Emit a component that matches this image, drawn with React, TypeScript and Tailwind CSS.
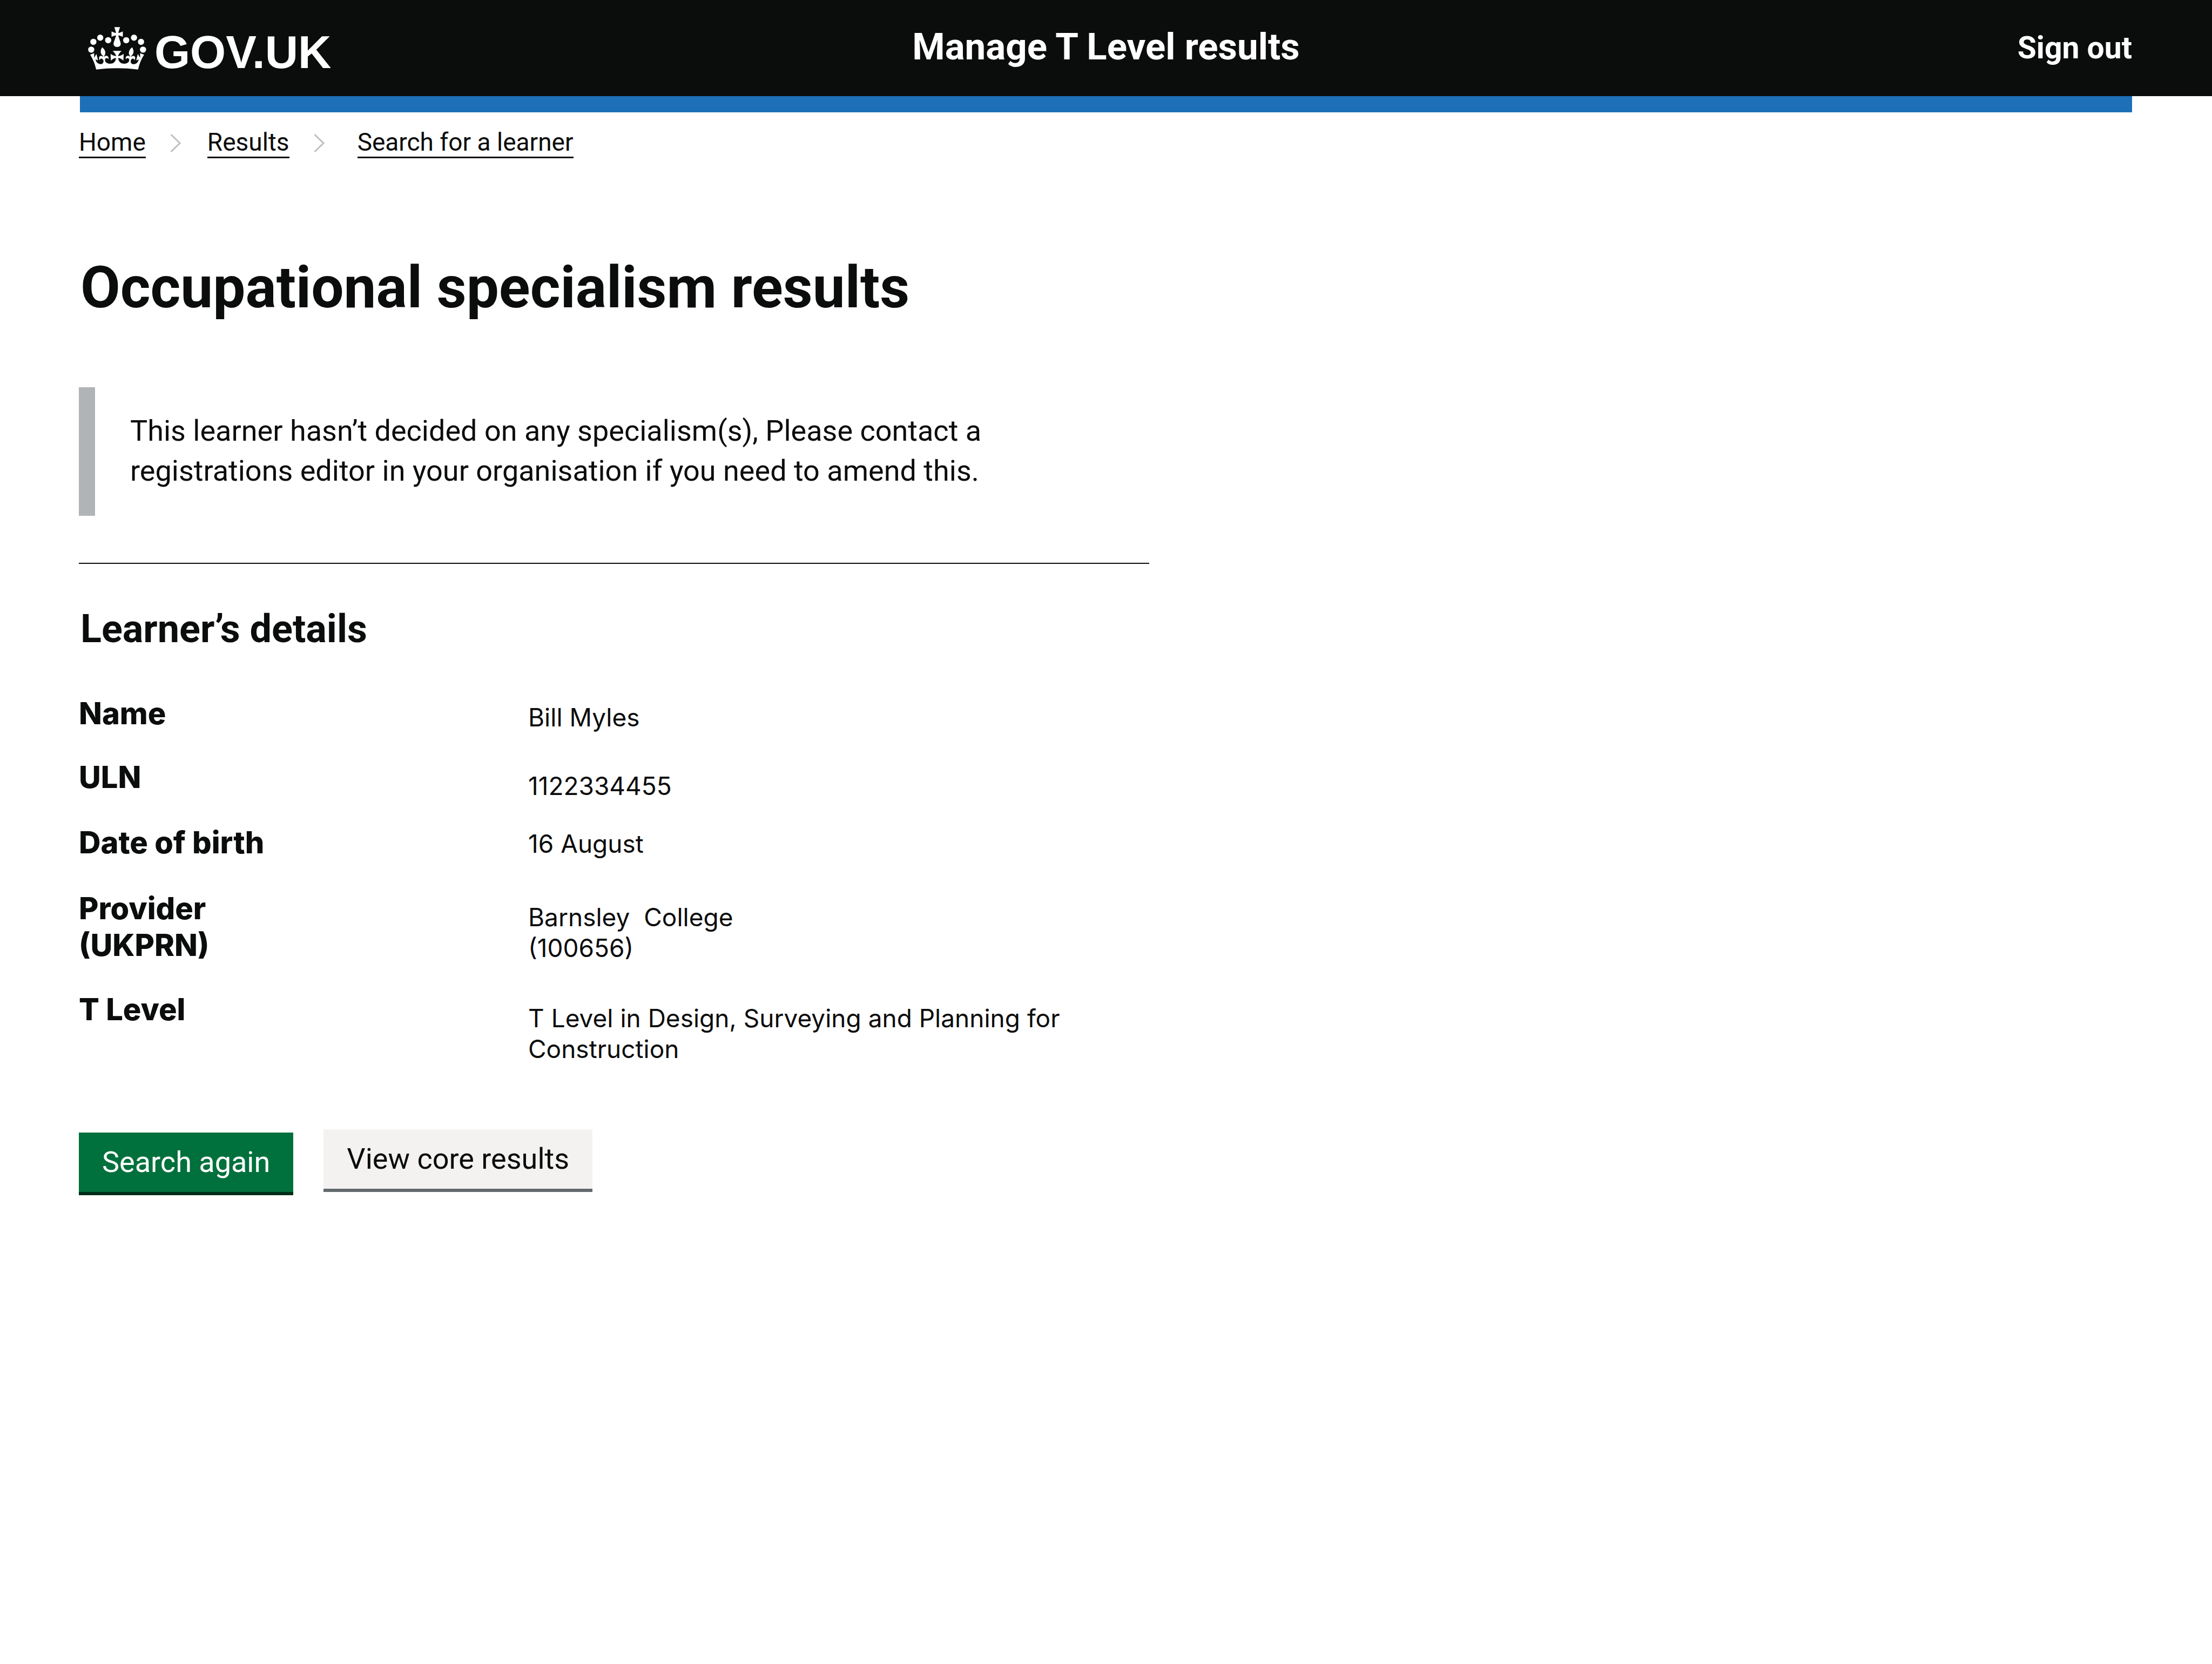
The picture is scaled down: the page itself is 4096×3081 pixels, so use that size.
import type { ReactNode } from "react";

const JEWELS = [
  [120, 111],
  [69, 142],
  [179, 130],
  [53, 200],
  [313, 130],
  [371, 111],
  [423, 142],
  [438, 200],
];

const CROSS_AND_PENDANT =
  "M225 33H267L255 72Q256 77 260 76L288 65V105L260 94Q255 94 255 99L270 144Q276 159 270 168Q262 180 246 180Q229 180 221 167Q216 158 221 144L237 99Q237 94 232 94L204 105V65L232 76Q236 77 237 72Z";

const HALF_BAND =
  "M45 238L75 227L74 261L92 233L104 281L85 272C88 293 104 308 124 308C143 307 151 287 139 272C130 263 118 265 117 279C109 270 109 254 118 249C126 245 135 248 141 253L142 248C120 232 118 208 134 182C162 204 164 230 149 248L151 253C158 243 171 243 178 252C183 258 183 266 180 272C174 260 161 260 156 273C152 291 170 305 191 305C217 305 234 293 238 263C228 262 212 268 199 282L197 231C210 244 226 248 239 248C234 234 226 222 212 210H247V338Q168 338 90 348C80 305 65 268 45 238Z";

function Crown() {
  return (
    <svg viewBox="30 32 432 317" aria-hidden="true" className="h-[79px] w-[108px] fill-current">
      {JEWELS.map(([x, y]) => (
        <circle key={`${x}-${y}`} cx={x} cy={y} r={23} />
      ))}
      <path d={CROSS_AND_PENDANT} />
      <path d={HALF_BAND} />
      <path d={HALF_BAND} transform="matrix(-1 0 0 1 491 0)" />
    </svg>
  );
}

function Header() {
  return (
    <header>
      <div className="grid h-[178px] grid-cols-[1fr_auto_1fr] items-center bg-[#0b0c0c] px-[148px] font-bold text-white">
        <a
          href="#home"
          className="ml-[15px] flex items-end gap-[15px] justify-self-start font-['Liberation_Sans',Arial,sans-serif] text-[85px] leading-[64px]"
        >
          <Crown />
          <span>GOV.UK</span>
        </a>
        <a href="#service" className="mb-[5px] text-[69px] leading-[80px]">
          Manage T Level results
        </a>
        <a href="#sign-out" className="justify-self-end text-[57px] leading-[64px]">
          Sign out
        </a>
      </div>
      <div className="mx-[148px] h-[30px] bg-[#1d70b8]" />
    </header>
  );
}

function Chevron() {
  return (
    <svg viewBox="0 0 20 34" aria-hidden="true" className="h-[34px] w-[20px] fill-none stroke-[#bfc1c3] stroke-3">
      <path d="M1.5 1 18 17 1.5 33" />
    </svg>
  );
}

function Crumb({ href, children }: { href: string; children: ReactNode }) {
  return (
    <a href={href} className="border-b-3 border-[#0b0c0c] text-[46px] leading-[54px]">
      {children}
    </a>
  );
}

function Breadcrumbs() {
  return (
    <nav aria-label="Breadcrumb">
      <ol className="flex items-center">
        <li className="flex items-center gap-[45px]">
          <Crumb href="#home">Home</Crumb>
          <Chevron />
        </li>
        <li className="ml-[49px] flex items-center gap-[45px]">
          <Crumb href="#results">Results</Crumb>
          <Chevron />
        </li>
        <li className="ml-[61px] flex items-center">
          <Crumb href="#search">Search for a learner</Crumb>
        </li>
      </ol>
    </nav>
  );
}

function Row({ label, value, gap, drop }: { label: string; value: string; gap: string; drop: string }) {
  return (
    <div className={`grid grid-cols-[832px_1fr] items-start ${gap}`}>
      <dt className="whitespace-pre-line text-[56px] font-extrabold leading-[68px]">{label}</dt>
      <dd className={`whitespace-pre-wrap text-[46px] leading-[57px] ${drop}`}>{value}</dd>
    </div>
  );
}

export default function App() {
  return (
    <div className="min-h-screen bg-white font-[Roboto,Arial,sans-serif] text-[#0b0c0c]">
      <Header />
      <div className="px-[146px] pt-[28px]">
        <Breadcrumbs />
        <main className="max-w-[1982px]">
          <h1 className="mt-[180px] pl-[3px] text-[107px] font-bold leading-[120px]">
            Occupational specialism results
          </h1>
          <p className="mt-[124px] border-l-30 border-[#b1b4b6] pt-[44px] pb-[46px] pl-[65px] pr-[240px] text-[54px] leading-[74px]">
            This learner hasn’t decided on any specialism(s), Please contact a registrations editor in your
            organisation if you need to amend this.
          </p>
          <hr className="mt-[87px] border-t-2 border-[#0b0c0c]" />
          <h2 className="mt-[81px] pl-[3px] text-[72px] font-bold leading-[80px]">Learner’s details</h2>
          <dl className="mt-[82px] font-[Inter,sans-serif]">
            <Row label="Name" value="Bill Myles" gap="" drop="mt-[13px]" />
            <Row label="ULN" value="1122334455" gap="mt-[48px]" drop="mt-[22px]" />
            <Row label="Date of birth" value="16 August" gap="mt-[42px]" drop="mt-[8px]" />
            <Row label={"Provider\n(UKPRN)"} value={"Barnsley  College\n(100656)"} gap="mt-[54px]" drop="mt-[22px]" />
            <Row
              label="T Level"
              value="T Level in Design, Surveying and Planning for Construction"
              gap="mt-[51px]"
              drop="mt-[22px]"
            />
          </dl>
          <div className="mt-[120px] flex items-start gap-[56px] text-[54px] leading-[64px]">
            <button
              type="button"
              className="mt-[6px] border-b-6 border-[#002d18] bg-[#00703c] px-[43px] py-[23px] text-white"
            >
              Search again
            </button>
            <button type="button" className="border-b-6 border-[#626a6e] bg-[#f3f2f1] px-[43px] py-[23px]">
              View core results
            </button>
          </div>
        </main>
      </div>
    </div>
  );
}
